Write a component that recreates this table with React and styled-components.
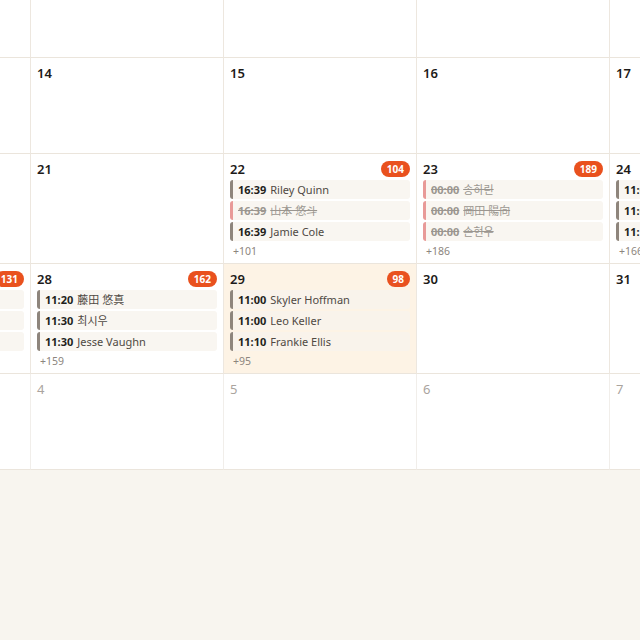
import React from 'react';
import styled, { createGlobalStyle } from 'styled-components';

const GlobalStyle = createGlobalStyle`
  body {
    margin: 0;
    background: #f8f5ef;
    font-family: "Noto Sans", "Noto Sans CJK KR", "Noto Sans CJK JP", sans-serif;
  }
`;

const weeks = [
  [{ d: 6 }, { d: 7 }, { d: 8 }, { d: 9 }, { d: 10 }, { d: 11 }, { d: 12 }],
  [{ d: 13 }, { d: 14 }, { d: 15 }, { d: 16 }, { d: 17 }, { d: 18 }, { d: 19 }],
  [
    { d: 20 },
    { d: 21 },
    {
      d: 22, count: 104, more: 101, events: [
        { t: '16:39', n: 'Riley Quinn' },
        { t: '16:39', n: '山本 悠斗', off: true },
        { t: '16:39', n: 'Jamie Cole' },
      ],
    },
    {
      d: 23, count: 189, more: 186, events: [
        { t: '00:00', n: '송하린', off: true },
        { t: '00:00', n: '岡田 陽向', off: true },
        { t: '00:00', n: '손현우', off: true },
      ],
    },
    {
      d: 24, count: 169, more: 166, events: [
        { t: '11:00', n: 'Avery Brooks' },
        { t: '11:00', n: 'Noah Park' },
        { t: '11:10', n: 'Mia Turner' },
      ],
    },
    { d: 25 },
    { d: 26 },
  ],
  [
    {
      d: 27, count: 131, more: 128, events: [
        { t: '11:00', n: 'Owen Blake' },
        { t: '11:10', n: 'Ella Ward' },
        { t: '11:20', n: 'Liam Ross' },
      ],
    },
    {
      d: 28, count: 162, more: 159, events: [
        { t: '11:20', n: '藤田 悠真' },
        { t: '11:30', n: '최시우' },
        { t: '11:30', n: 'Jesse Vaughn' },
      ],
    },
    {
      d: 29, today: true, count: 98, more: 95, events: [
        { t: '11:00', n: 'Skyler Hoffman' },
        { t: '11:00', n: 'Leo Keller' },
        { t: '11:10', n: 'Frankie Ellis' },
      ],
    },
    { d: 30 },
    { d: 31 },
    { d: 1, other: true },
    { d: 2, other: true },
  ],
  [3, 4, 5, 6, 7, 8, 9].map((d) => ({ d, other: true })),
];

// the month grid is scrolled a little to the right and down inside its viewport
const Viewport = styled.div`
  width: 640px;
  overflow: hidden;
`;

const Grid = styled.div`
  display: grid;
  grid-template-columns: repeat(7, 193px);
  margin-left: -162px;
  margin-top: -38px;
  background: #fff;
`;

const Cell = styled.div`
  box-sizing: border-box;
  min-height: 96px;
  padding: 6px;
  display: flex;
  flex-direction: column;
  gap: 2px;
  background: ${(p) => (p.$today ? '#fdf3e5' : '#fff')};
  border-right: 1px solid ${(p) => (p.$other ? '#f1eeea' : '#ede7df')};
  border-bottom: 1px solid #ebe5dc;
`;

const Head = styled.div`
  display: flex;
  align-items: center;
  justify-content: space-between;
  height: 18px;
`;

const DayNum = styled.span`
  font-size: 13px;
  line-height: 17px;
  font-weight: ${(p) => (p.$other ? 400 : 600)};
  color: ${(p) => (p.$other ? '#aaa49e' : '#1d1b19')};
`;

const Badge = styled.span`
  height: 16px;
  line-height: 16px;
  padding: 0 6px;
  border-radius: 8px;
  background: #e9511e;
  color: #fff;
  font-size: 10px;
  font-weight: 700;
`;

const Chip = styled.div`
  height: 19px;
  line-height: 19px;
  padding: 0 5px;
  border-left: 3px solid ${(p) => (p.$off ? '#e89a98' : '#8e857c')};
  border-radius: 3px;
  background: ${(p) => (p.$today ? '#f9f3eb' : '#f9f6f1')};
  font-size: 11px;
  white-space: nowrap;
  overflow: hidden;
  color: ${(p) => (p.$off ? '#9b9690' : '#4f4943')};
  text-decoration: ${(p) => (p.$off ? 'line-through' : 'none')};
`;

const Time = styled.b`
  font-weight: 700;
  color: ${(p) => (p.$off ? '#9b9690' : '#231f1c')};
  margin-right: 4px;
`;

const More = styled.div`
  font-size: 10.5px;
  line-height: 12px;
  color: #8c857e;
  padding: 2px 0 0 3px;
`;

function DayCell({ day }) {
  return (
    <Cell $today={day.today} $other={day.other}>
      <Head>
        <DayNum $other={day.other}>{day.d}</DayNum>
        {day.count && <Badge>{day.count}</Badge>}
      </Head>
      {(day.events || []).map((e, i) => (
        <Chip key={i} $off={e.off} $today={day.today}>
          <Time $off={e.off}>{e.t}</Time>
          {e.n}
        </Chip>
      ))}
      {day.more && <More>+{day.more}</More>}
    </Cell>
  );
}

export default function App() {
  return (
    <>
      <GlobalStyle />
      <Viewport>
        <Grid>
          {weeks.flat().map((day, i) => (
            <DayCell key={i} day={day} />
          ))}
        </Grid>
      </Viewport>
    </>
  );
}
